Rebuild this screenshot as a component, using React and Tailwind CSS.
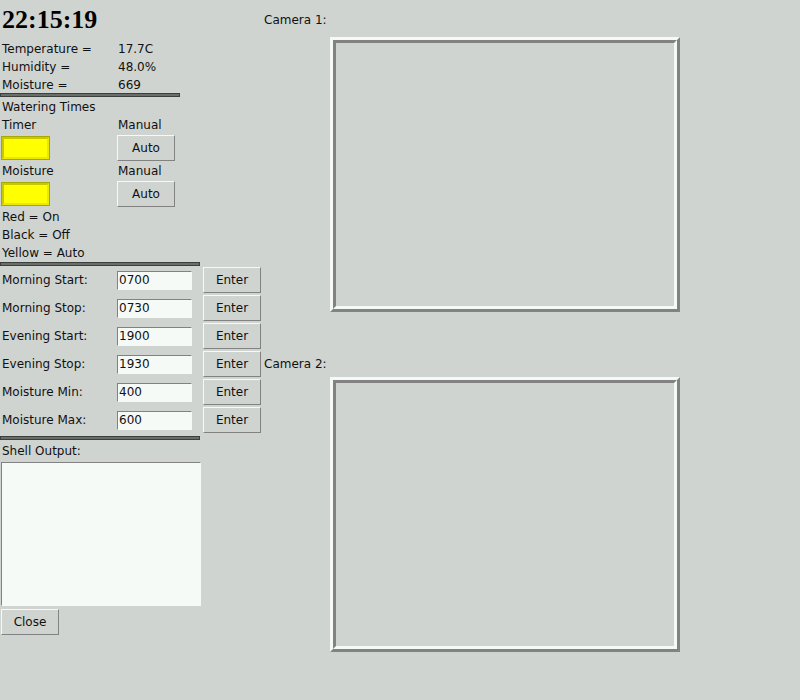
import React from 'react'

const raised = "border border-t-[#f6faf6] border-l-[#f6faf6] border-b-[#828282] border-r-[#828282]"
const sunken = "border border-t-[#828282] border-l-[#828282] border-b-[#f6faf6] border-r-[#f6faf6]"

function Line({ label, value }) {
  return (
    <div className="flex h-[18px] leading-[18px] pt-[1px]">
      <div className="w-[118px] pl-[2px]">{label}</div>
      <div>{value}</div>
    </div>
  )
}

function TkButton({ text, width = "w-[58px]" }) {
  return (
    <div className={`${width} h-[26px] ${raised} flex items-center justify-center text-[#111]`}>
      {text}
    </div>
  )
}

function Indicator() {
  return (
    <div className="ml-[1px] mt-[1px] w-[49px] h-[24px] border border-[#a8a800]">
      <div className="w-full h-full border-2 border-t-[#c8c800] border-l-[#c8c800] border-b-[#e8e800] border-r-[#e8e800] bg-[#ffff00]" />
    </div>
  )
}

function Separator({ width, className = "" }) {
  return <div className={`${width} h-[4px] border border-[#3c403c] bg-[#6a6e6a] ${className}`} />
}

function EntryRow({ label, value }) {
  return (
    <div className="flex items-center h-[28px]">
      <div className="w-[117px] pl-[2px]">{label}</div>
      <div className={`w-[75px] h-[19px] ${sunken} bg-[#f6faf6] leading-[17px] pl-[1px]`}>{value}</div>
      <div className="ml-[11px]">
        <TkButton text="Enter" />
      </div>
    </div>
  )
}

function CameraFrame() {
  return (
    <div className="ml-[66px] w-[350px] h-[275px] border-[3px] border-t-[#f6faf6] border-l-[#f6faf6] border-b-[#828282] border-r-[#828282]">
      <div className="w-full h-full border-[3px] border-t-[#828282] border-l-[#828282] border-b-[#f6faf6] border-r-[#f6faf6]" />
    </div>
  )
}

export default function App() {
  const rows = [
    ["Morning Start:", "0700"],
    ["Morning Stop:", "0730"],
    ["Evening Start:", "1900"],
    ["Evening Stop:", "1930"],
    ["Moisture Min:", "400"],
    ["Moisture Max:", "600"],
  ]

  return (
    <div className="w-[800px] h-[700px] bg-[#d0d4d0] flex text-[12px] text-[#111] font-['DejaVu_Sans',sans-serif]">
      {/* left controls */}
      <div className="w-[264px] flex flex-col">
        <div className="h-[39px] leading-[39px] pl-[2px] text-[26px] font-bold text-black font-['Liberation_Serif',serif]">
          22:15:19
        </div>
        <Line label="Temperature =" value="17.7C" />
        <Line label="Humidity =" value="48.0%" />
        <Line label="Moisture =" value="669" />
        <Separator width="w-[180px]" />
        <Line label="Watering Times" value="" />
        <Line label="Timer" value="Manual" />
        <div className="flex mt-[2px] h-[26px]">
          <div className="w-[117px]"><Indicator /></div>
          <TkButton text="Auto" />
        </div>
        <Line label="Moisture" value="Manual" />
        <div className="flex mt-[2px] h-[26px]">
          <div className="w-[117px]"><Indicator /></div>
          <TkButton text="Auto" />
        </div>
        <Line label="Red = On" value="" />
        <Line label="Black = Off" value="" />
        <Line label="Yellow = Auto" value="" />
        <Separator width="w-[200px]" className="mt-[1px] h-[3px]" />
        {rows.map(([l, v]) => (
          <EntryRow key={l} label={l} value={v} />
        ))}
        <Separator width="w-[200px]" className="mt-[2px]" />
        <div className="mt-[2px] h-[18px] leading-[18px] pl-[2px]">Shell Output:</div>
        <div className={`mt-[2px] ml-[1px] w-[200px] h-[144px] ${sunken} bg-[#f6faf6]`} />
        <div className="mt-[3px] ml-[1px]">
          <TkButton text="Close" />
        </div>
      </div>

      {/* cameras */}
      <div className="flex flex-col pt-[10px]">
        <div className="h-[18px] leading-[18px] pt-[1px]">Camera 1:</div>
        <div className="mt-[9px]"><CameraFrame /></div>
        <div className="mt-[42px] h-[18px] leading-[18px] pt-[1px]">Camera 2:</div>
        <div className="mt-[5px]"><CameraFrame /></div>
      </div>
    </div>
  )
}
